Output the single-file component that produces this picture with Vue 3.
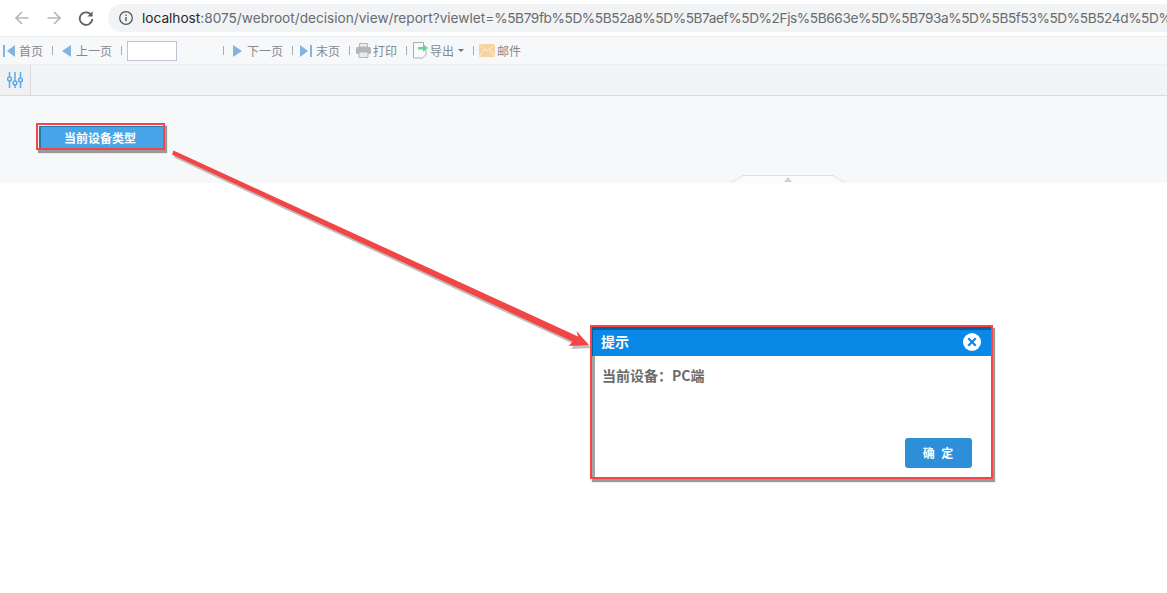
<script setup>
const arrow = '173.500,150.500 578,336.500 576.500,331 589,345 569,346 572.500,341.500 172,154.500'
</script>

<template>
  <div class="page">
    <header class="chrome">
      <svg class="nav first" width="18" height="18" viewBox="0 0 18 18"><path d="M15.500 9H3M9 3L3 9l6 6" fill="none" stroke="#b4b7bb" stroke-width="1.700"/></svg>
      <svg class="nav" width="18" height="18" viewBox="0 0 18 18"><path d="M2.500 9H15M9 3l6 6-6 6" fill="none" stroke="#b4b7bb" stroke-width="1.700"/></svg>
      <svg class="nav" width="18" height="18" viewBox="0 0 18 18"><path d="M14.500 6.500A6.300 6.300 0 1 0 15.300 10" fill="none" stroke="#5f6368" stroke-width="1.800"/><path d="M15.600 2.300v5.200h-5.200z" fill="#5f6368"/></svg>
      <div class="address">
        <svg class="info" width="16" height="16" viewBox="0 0 16 16"><circle cx="8" cy="8" r="6.300" fill="none" stroke="#55585c" stroke-width="1.300"/><rect x="7.300" y="7" width="1.400" height="4.200" fill="#55585c"/><rect x="7.300" y="4.600" width="1.400" height="1.400" fill="#55585c"/></svg>
        <div class="url"><span class="host">localhost</span>:8075/webroot/decision/view/report?viewlet=<span class="query">%5B79fb%5D%5B52a8%5D%5B7aef%5D%2Fjs%5B663e%5D%5B793a%5D%5B5f53%5D%5B524d%5D%</span></div>
      </div>
    </header>

    <nav class="toolbar">
      <svg width="12" height="12" viewBox="0 0 12 12"><path d="M0 0h2v12H0zM12 0v12L4 6z" fill="#84b3e2"/></svg>
      <span class="lbl l-first">首页</span><i class="sep"></i>
      <svg width="9" height="12" viewBox="0 0 9 12"><path d="M9 0v12L0 6z" fill="#84b3e2"/></svg>
      <span class="lbl l-prev">上一页</span><i class="sep"></i>
      <div class="page-input"></div><i class="sep s-after-input"></i>
      <svg width="9" height="12" viewBox="0 0 9 12"><path d="M0 0v12l9-6z" fill="#84b3e2"/></svg>
      <span class="lbl l-next">下一页</span><i class="sep s-tight"></i>
      <svg width="12" height="12" viewBox="0 0 12 12"><path d="M0 0v12l8-6zM10 0h2v12h-2z" fill="#84b3e2"/></svg>
      <span class="lbl l-last">末页</span><i class="sep s-close"></i>
      <svg width="15" height="15" viewBox="0 0 15 15"><path d="M3.500 0.500h8v3.500h-8z" fill="#eceef0" stroke="#b3b6ba"/><rect y="4" width="15" height="7" rx="1.500" fill="#b3b6ba"/><path d="M3 9h9v5.500H3z" fill="#e8eaec" stroke="#b3b6ba"/></svg>
      <span class="lbl l-print">打印</span><i class="sep s-close"></i>
      <svg width="15" height="17" viewBox="0 0 15 17"><path d="M.5.500h10v3M.5.500v15.500h9l3.500-3.500V8" fill="#fbfbfc" stroke="#a9adb2"/><path d="M5 5h5V2l5 4-5 4V7.500H5z" fill="#6fcf97"/></svg>
      <span class="lbl l-export">导出</span>
      <i class="caret"></i><i class="sep s-after-caret"></i>
      <svg width="16" height="13" viewBox="0 0 16 13"><rect width="16" height="13" fill="#f5d3a2"/><path d="M0 .5l8 6.500 8-6.500M0 12.500l5.500-7M16 12.500l-5.500-7" fill="none" stroke="#fbeedb"/></svg>
      <span class="lbl l-mail">邮件</span>
    </nav>

    <section class="tabs">
      <div class="tab">
        <svg width="16" height="16" viewBox="0 0 16 16"><g stroke="#5aaaea" stroke-width="1.500" fill="#f0f1f3"><path d="M2.500 0v16M8 0v16M13.500 0v16"/><circle cx="2.500" cy="7" r="1.900"/><circle cx="8" cy="11" r="1.900"/><circle cx="13.500" cy="8" r="1.900"/></g></svg>
      </div>
    </section>

    <section class="params">
      <button class="device-btn">当前设备类型</button>
      <svg class="splitter" width="114" height="8" viewBox="0 0 114 8"><path d="M0.500 7.500L12 .5h90l11.500 7" fill="#fbfbfc" stroke="#dfe0e2"/><path d="M53 7l4-5 4 5z" fill="#d0d1d3"/></svg>
    </section>

    <div class="mark-btn"></div>

    <svg class="arrow" width="1167" height="593" viewBox="0 0 1167 593">
      <polygon :points="arrow" transform="translate(2 3)" fill="#8a8a8a" fill-opacity=".55"/>
      <polygon :points="arrow" fill="#f24646"/>
    </svg>

    <div class="mark-dialog">
      <div class="dialog-head">
        <span class="title">提示</span>
        <svg width="18" height="18" viewBox="0 0 18 18"><circle cx="9" cy="9" r="9" fill="#fff"/><path d="M5.300 5.300l7.400 7.400M12.700 5.300l-7.400 7.400" stroke="#0a88e8" stroke-width="2.200"/></svg>
      </div>
      <p class="dialog-msg">当前设备：PC端</p>
      <button class="ok">确 定</button>
    </div>
  </div>
</template>

<style scoped>
.page {
  position: relative;
  width: 1167px;
  height: 593px;
  overflow: hidden;
  background: #fff;
  font-family: "Noto Sans CJK SC", "Liberation Sans", sans-serif;
}
.chrome {
  display: flex;
  align-items: center;
  height: 36px;
  background: #fff;
  border-bottom: 1px solid #ebecee;
}
.nav { margin-left: 14px; flex: none; }
.nav.first { margin-left: 13px; }
.address {
  display: flex;
  align-items: center;
  flex: none;
  width: 1059px;
  height: 28px;
  margin-left: 13px;
  padding-left: 10px;
  border-radius: 14px 0 0 14px;
  background: #f1f3f4;
  box-sizing: border-box;
  overflow: hidden;
}
.info { flex: none; }
.url {
  margin-left: 8px;
  font: 13.650px "Inter", "Liberation Sans", sans-serif;
  color: #686c70;
  white-space: nowrap;
}
.host { color: #27292c; }
.query { letter-spacing: -0.4px; }
.toolbar {
  display: flex;
  align-items: center;
  height: 27px;
  padding-left: 3px;
  background: #f7f8fa;
  border-bottom: 1px solid #eeeff2;
}
.toolbar svg { flex: none; }
.lbl { font-size: 12px; line-height: 16px; color: #85898f; white-space: nowrap; }
.l-first, .l-last { margin-left: 4px; }
.l-prev, .l-next { margin-left: 5px; }
.l-print, .l-mail { margin-left: 2px; }
.l-export { margin-left: 2px; }
.sep { flex: none; width: 1px; height: 9px; margin: 0 9px; background: #a9acb1; }
.s-tight { margin-right: 7px; }
.s-close { margin-right: 6px; }
.page-input {
  flex: none;
  width: 48px;
  height: 18px;
  margin-left: -4px;
  margin-right: 46px;
  border: 1px solid #c0c4d2;
  background: #fff;
}
.s-after-input { margin-left: 0; }
.caret {
  flex: none;
  width: 0;
  height: 0;
  margin-left: 4px;
  border-style: solid;
  border-width: 3px 3px 0;
  border-color: #6f7276 transparent transparent;
}
.s-after-caret { margin-left: 9px; margin-right: 5px; }
.tabs {
  height: 30px;
  background: #f3f4f7;
  border-bottom: 1px solid #d9dbe0;
}
.tab {
  display: flex;
  align-items: center;
  justify-content: center;
  width: 30px;
  height: 30px;
  background: #f0f1f3;
  border-right: 1px solid #d6d8dc;
}
.params {
  position: relative;
  height: 87px;
  padding: 30px 0 0 39px;
  background: #f7f8fa;
  box-sizing: border-box;
}
.device-btn {
  display: block;
  width: 124px;
  height: 23px;
  padding: 0 4px 0 0;
  border: 0;
  border-left: 2px solid #2d74a8;
  border-top: 1px solid #2d74a8;
  background: #46a4e8;
  color: #fff;
  font: 700 12px/20px "Noto Sans CJK SC", sans-serif;
  box-sizing: border-box;
}
.splitter { position: absolute; left: 731px; bottom: 0; display: block; }
.mark-btn {
  position: absolute;
  left: 36px;
  top: 123px;
  width: 129px;
  height: 27px;
  border: 2px solid #f24646;
  box-sizing: border-box;
  box-shadow: 2px 3px 1px #9a9a9a;
}
.arrow { position: absolute; left: 0; top: 0; pointer-events: none; }
.mark-dialog {
  position: absolute;
  left: 590px;
  top: 325px;
  width: 403px;
  height: 154px;
  border: 2px solid #f24646;
  background: #fff;
  box-sizing: border-box;
  box-shadow: 2px 3px 1px #9a9a9a, inset 3px 0 0 #a3a3a3;
}
.dialog-head {
  display: flex;
  align-items: center;
  justify-content: space-between;
  height: 29px;
  padding: 0 10px 0 9px;
  background: #0a88e8;
  box-shadow: inset 0 3px 0 #04609f, inset 1px 0 0 #04609f;
  color: #fff;
  font-size: 14px;
  font-weight: 700;
}
.title { margin-top: -2px; }
.dialog-msg {
  margin: 9px 0 0 10px;
  font-size: 14px;
  line-height: 20px;
  font-weight: 700;
  color: #6b6b6b;
}
.ok {
  position: absolute;
  right: 19px;
  bottom: 9px;
  width: 67px;
  height: 30px;
  padding: 0;
  border: 0;
  border-radius: 3px;
  background: #2d8fd8;
  color: #fff;
  font: 700 12px/30px "Noto Sans CJK SC", sans-serif;
  letter-spacing: 1px;
  word-spacing: 2px;
}
</style>

<style>
html, body { background: #fff; overflow: hidden; }
</style>
